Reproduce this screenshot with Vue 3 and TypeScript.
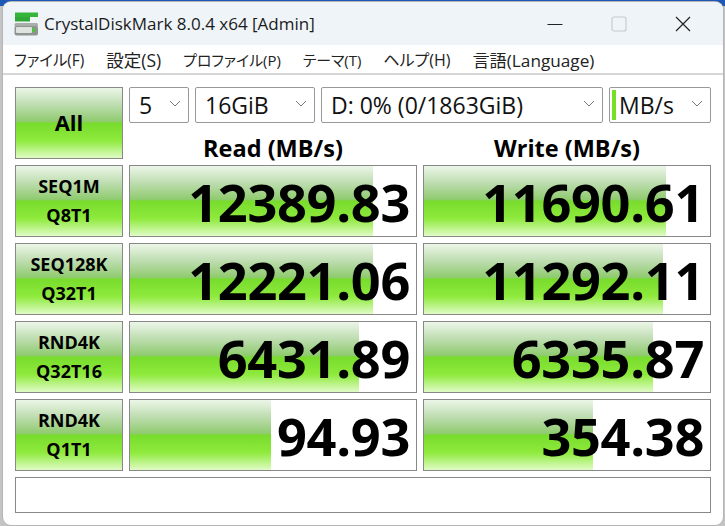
<script setup lang="ts">
interface Row { a: string; b: string; r: string; rw: number; w: string; ww: number }
const rows: Row[] = [
  { a: 'SEQ1M', b: 'Q8T1', r: '12389.83', rw: 243, w: '11690.61', ww: 242 },
  { a: 'SEQ128K', b: 'Q32T1', r: '12221.06', rw: 243, w: '11292.11', ww: 239 },
  { a: 'RND4K', b: 'Q32T16', r: '6431.89', rw: 229, w: '6335.87', ww: 229 },
  { a: 'RND4K', b: 'Q1T1', r: '94.93', rw: 141, w: '354.38', ww: 169 },
]
const menus = [
  { t: 'ファイル(F)', c: 'kana' },
  { t: '設定(S)', c: 'kanji' },
  { t: 'プロファイル(P)', c: 'kana-s' },
  { t: 'テーマ(T)', c: 'kana-s' },
  { t: 'ヘルプ(H)', c: 'kana-l' },
  { t: '言語(Language)', c: 'kanji-s' },
]
</script>

<template>
  <div class="desk">
    <div class="win">
      <header class="title">
        <svg class="logo" width="24" height="24" viewBox="0 0 24 24">
          <rect x="1" y="0.5" width="23" height="4.5" fill="#35b53a" />
          <rect x="1" y="5" width="15" height="4.5" fill="#2fa836" />
          <rect x="0.5" y="11" width="23.5" height="4" rx="1.5" fill="#a9aeaa" />
          <rect x="0.5" y="14" width="23.5" height="9.5" rx="2" fill="#8f9491" />
          <rect x="2" y="15" width="16" height="6" rx="1" fill="#dfe3e0" />
          <rect x="18" y="16" width="3" height="4" fill="#4fc13f" />
        </svg>
        <span class="title-text">CrystalDiskMark 8.0.4 x64 [Admin]</span>
        <div class="caps">
          <svg width="16" height="16" viewBox="0 0 16 16"><path d="M0.5 8.5H15.5" stroke="#222" stroke-width="1.2" fill="none" /></svg>
          <svg width="16" height="16" viewBox="0 0 16 16"><rect x="1" y="1" width="14" height="14" rx="2" stroke="#c6cad2" stroke-width="1.2" fill="none" /></svg>
          <svg width="16" height="16" viewBox="0 0 16 16"><path d="M1 1L15 15M15 1L1 15" stroke="#222" stroke-width="1.2" fill="none" /></svg>
        </div>
      </header>
      <nav class="menu"><span v-for="m in menus" :key="m.t" :class="m.c">{{ m.t }}</span></nav>
      <main class="body">
        <div class="grid">
          <div class="btn all">All</div>
          <div class="controls">
            <div class="top">
              <div class="sel s1"><span>5</span><svg class="chev" width="12" height="7" viewBox="0 0 12 7"><path d="M1 1l5 5 5-5" /></svg></div>
              <div class="sel s2"><span>16GiB</span><svg class="chev" width="12" height="7" viewBox="0 0 12 7"><path d="M1 1l5 5 5-5" /></svg></div>
              <div class="sel s3"><span>D: 0% (0/1863GiB)</span><svg class="chev" width="12" height="7" viewBox="0 0 12 7"><path d="M1 1l5 5 5-5" /></svg></div>
              <div class="sel s4"><i class="mark"></i><span>MB/s</span><svg class="chev" width="12" height="7" viewBox="0 0 12 7"><path d="M1 1l5 5 5-5" /></svg></div>
            </div>
            <div class="heads"><b>Read (MB/s)</b><b>Write (MB/s)</b></div>
          </div>
          <template v-for="row in rows" :key="row.r">
            <div class="btn label"><span>{{ row.a }}</span><span>{{ row.b }}</span></div>
            <div class="cell"><div class="bar" :style="{ width: row.rw + 'px' }"></div><span class="num">{{ row.r }}</span></div>
            <div class="cell"><div class="bar" :style="{ width: row.ww + 'px' }"></div><span class="num">{{ row.w }}</span></div>
          </template>
          <div class="msg"></div>
        </div>
      </main>
    </div>
  </div>
</template>

<style>
html, body { margin: 0; padding: 0; }
</style>

<style scoped>
.desk {
  width: 725px; height: 526px; box-sizing: border-box; overflow: hidden;
  padding: 2px 2px 0 3px;
  background: linear-gradient(#1d58b8 0 6px, #c4c4c4 6px);
  font-family: "Open Sans", "Noto Sans CJK JP", sans-serif;
  color: #000;
}
.win {
  height: 523px; box-sizing: border-box; background: #fff;
  border-radius: 8px; overflow: hidden;
  display: flex; flex-direction: column;
  box-shadow: 0 0 0 1px #b5b5b5;
}
.title {
  height: 43px; flex: none; background: #eff4f9;
  display: flex; align-items: center;
}
.logo { margin: 0 6px 0 11px; }
.title-text { font-size: 17px; color: #1b1b1b; font-family: "Open Sans", sans-serif; }
.caps { margin-left: auto; display: flex; gap: 48px; padding-right: 32px; }
.caps svg { display: block; }
.menu {
  height: 30px; flex: none; background: #fff; box-sizing: border-box;
  display: flex; gap: 22px; align-items: center; padding: 0 0 0 11px;
  font-feature-settings: "palt"; color: #222; white-space: nowrap;
  border-bottom: 2px solid #d6d6d6;
}
.kana { font-size: 15.4px; }
.kana-s { font-size: 14.9px; }
.kana-l { font-size: 16px; }
.kanji { font-size: 17.5px; }
.kanji-s { font-size: 17.2px; }
.body { padding: 12px 12px 0 12px; }
.grid {
  display: grid; grid-template-columns: 108px 288px 288px;
  grid-template-rows: 72px 72px 72px 72px 72px 36px; gap: 6px;
}
.btn, .cell, .msg { box-sizing: border-box; border: 1px solid #888; }
.btn, .bar {
  background: linear-gradient(#ecf6e8 0%, #bcdcae 25%, #8fcb6e 48%, #78dc2c 50%, #8eea3c 75%, #e0fbc6 100%);
}
.btn { display: flex; flex-direction: column; align-items: center; justify-content: center; font-weight: 700; }
.all { font-size: 22px; padding-bottom: 2px; }
.label { font-size: 18px; gap: 5px; line-height: 24px; padding-bottom: 2px; }
.controls { grid-column: 2 / 4; display: flex; flex-direction: column; gap: 0; }
.top { display: flex; gap: 6px; height: 36px; flex: none; }
.sel {
  box-sizing: border-box; border: 1px solid #999; border-radius: 2px; background: #fff;
  display: flex; align-items: center; padding: 0 7px 0 9px; font-size: 23px; color: #111; position: relative;
}
.sel span { flex: 1; white-space: nowrap; }
.s1 { width: 60px; } .s2 { width: 120px; } .s3 { width: 282px; } .s4 { width: 102px; padding-left: 2px; }
.mark { width: 4px; height: 30px; background: #76e025; margin: 0 3px 0 0; }
.chev { fill: none; stroke: #777; stroke-width: 1; flex: none; margin-top: -3px; }
.heads { display: grid; grid-template-columns: 288px 288px; gap: 6px; text-align: center; font-size: 23.5px; line-height: 22px; padding-top: 14px; }
.heads b { font-weight: 700; }
.cell { position: relative; background: #fff; overflow: hidden; display: flex; align-items: center; justify-content: flex-end; }
.bar { position: absolute; left: 0; top: 0; bottom: 0; }
.num { position: relative; font-size: 52.3px; font-weight: 700; padding: 2px 6px 0 0; line-height: 1; letter-spacing: -0.3px; }
.msg { grid-column: 1 / 4; height: 36px; background: #fff; }
</style>
